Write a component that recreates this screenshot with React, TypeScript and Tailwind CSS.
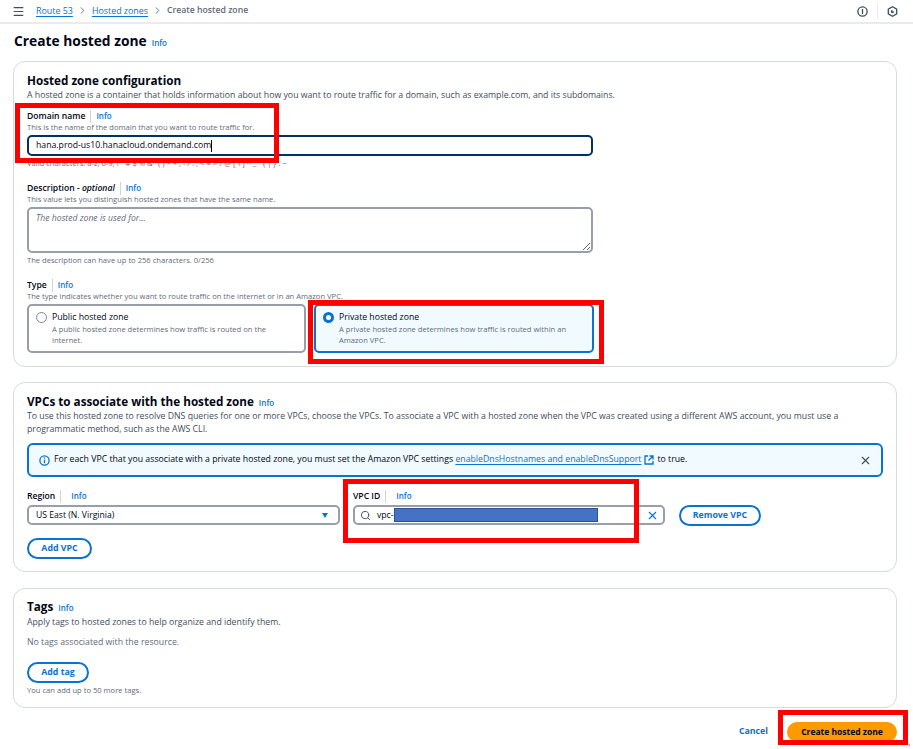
import { Search, X, Menu, ChevronRight } from "lucide-react"

const InfoLink = ({ className = "" }: { className?: string }) => (
    <span className={`text-[8px] font-semibold text-[#0972d3] ${className}`}>Info</span>
)

const FieldLabel = ({ children, gap = "ml-[5px]" }: { children: React.ReactNode; gap?: string }) => (
    <div className="flex items-center h-[14px] text-[8.6px] leading-[14px] font-semibold text-[#000716]">
        <span>{children}</span>
        <span className="ml-[5px] h-[13px] w-px bg-[#d1d5db]" />
        <InfoLink className={gap} />
    </div>
)

const Hint = ({ children, className = "" }: { children: React.ReactNode; className?: string }) => (
    <p className={`text-[7.6px] leading-[11px] text-[#5f6b7a] ${className}`}>{children}</p>
)

const CardTitle = ({ children, info = true }: { children: React.ReactNode; info?: boolean }) => (
    <div className="flex items-baseline gap-[5px]">
        <h2 className="text-[11.7px] leading-[18px] font-bold text-[#000716]">{children}</h2>
        {info && <InfoLink />}
    </div>
)

const PillButton = ({ children, className = "" }: { children: React.ReactNode; className?: string }) => (
    <button className={`h-[21px] rounded-full border-2 border-[#0972d3] bg-white text-[8.8px] font-bold text-[#0972d3] ${className}`}>
        {children}
    </button>
)

const RedBox = ({ className }: { className: string }) => (
    <div className={`absolute border-[5px] border-[#ff0000] ${className}`} />
)

const App = () => {
    return (
        <div className="relative h-[749px] w-[913px] overflow-hidden bg-white font-['Open_Sans',sans-serif] text-[#000716]">
            {/* Top bar */}
            <header className="flex h-[24px] items-center border-b-2 border-[#e9ebed] pl-[12px] pr-[15px]">
                <Menu size={13} strokeWidth={2.2} className="text-[#414d5c]" />
                <nav className="ml-[11px] flex items-center text-[8.9px] font-medium">
                    <span className="text-[#0972d3] underline underline-offset-2">Route 53</span>
                    <ChevronRight size={11} className="mx-[4px] text-[#5f6b7a]" />
                    <span className="text-[#0972d3] underline underline-offset-2">Hosted zones</span>
                    <ChevronRight size={11} className="mx-[4px] text-[#5f6b7a]" />
                    <span className="text-[8.7px] font-semibold text-[#5f6b7a]">Create hosted zone</span>
                </nav>
                <div className="ml-auto flex items-center">
                    <svg width="11" height="11" viewBox="0 0 11 11" fill="none" stroke="#414d5c" strokeWidth="1.300">
                        <circle cx="5.500" cy="5.500" r="4.600" />
                        <path d="M5.500 3v5" />
                    </svg>
                    <span className="mx-[9px] h-[16px] w-px bg-[#e9ebed]" />
                    <svg width="11" height="11" viewBox="0 0 11 11" fill="none" stroke="#414d5c" strokeWidth="1.300">
                        <path d="M5.500.8l4.200 2.300v4.800L5.500 10.200 1.300 7.900V3.100z" />
                        <path d="M5.500 3.800a1.700 1.700 0 1 0 1.700 1.700H5.500z" fill="#414d5c" stroke="none" />
                    </svg>
                </div>
            </header>

            <main className="px-[14px]">
                <div className="mt-[6px] flex items-baseline gap-[5px]">
                    <h1 className="text-[13.8px] leading-[21px] font-bold text-[#000716]">Create hosted zone</h1>
                    <InfoLink />
                </div>

                {/* Hosted zone configuration */}
                <section className="mt-[10px] -ml-px h-[306px] w-[884px] rounded-[12px] border border-[#d5dbdb] px-[13px] pt-[9px]">
                    <CardTitle info={false}>Hosted zone configuration</CardTitle>
                    <p className="text-[8.74px] leading-[13px] text-[#414d5c]">
                        A hosted zone is a container that holds information about how you want to route traffic for a domain, such as example.com, and its subdomains.
                    </p>

                    <div className="mt-[7px]">
                        <FieldLabel>Domain name</FieldLabel>
                        <Hint className="-mt-px">This is the name of the domain that you want to route traffic for.</Hint>
                        <div className="mt-[2px] flex h-[21px] w-[566px] items-center rounded-[5px] border-2 border-[#033160] pl-[7px] text-[8.7px] text-[#000716]">
                            hana.prod-us10.hanacloud.ondemand.com
                            <span className="h-[12px] w-px bg-[#000716]" />
                        </div>
                        <Hint className="mt-[2px] whitespace-nowrap">{"Valid characters: a-z, 0-9, ! \" # $ % & ' ( ) * + , - / : ; < = > ? @ [ \\ ] ^ _ ` { | } . ~"}</Hint>
                    </div>

                    <div className="mt-[12px]">
                        <FieldLabel>
                            Description - <em className="font-semibold">optional</em>
                        </FieldLabel>
                        <Hint className="-mt-px">This value lets you distinguish hosted zones that have the same name.</Hint>
                        <textarea
                            readOnly
                            placeholder="The hosted zone is used for..."
                            className="mt-[2px] block h-[46px] w-[566px] rounded-[5px] border-2 border-[#979fa9] px-[7px] py-[2px] text-[8.65px] italic leading-[14px] placeholder:text-[#5f6b7a] outline-none"
                        />
                        <Hint className="mt-[2px]">The description can have up to 256 characters. 0/256</Hint>
                    </div>

                    <div className="mt-[12px]">
                        <FieldLabel>Type</FieldLabel>
                        <Hint className="-mt-px">The type indicates whether you want to route traffic on the internet or in an Amazon VPC.</Hint>
                        <div className="mt-[2px] flex w-[567px] gap-[8px]">
                            <div className="flex h-[49px] w-[279px] rounded-[5px] border-2 border-[#979fa9] pl-[7px] pt-[5px]">
                                <span className="mt-px size-[11px] shrink-0 rounded-full border border-[#7d8998]" />
                                <div className="ml-[5px]">
                                    <div className="text-[8.7px] leading-[13px] font-medium">Public hosted zone</div>
                                    <Hint className="w-[240px] leading-[10px]">A public hosted zone determines how traffic is routed on the internet.</Hint>
                                </div>
                            </div>
                            <div className="flex h-[49px] w-[280px] rounded-[5px] border-2 border-[#0972d3] bg-[#f1faff] pl-[7px] pt-[5px]">
                                <span className="mt-px size-[11px] shrink-0 rounded-full border-[3px] border-[#0972d3] bg-white" />
                                <div className="ml-[5px]">
                                    <div className="text-[8.7px] leading-[13px] font-medium">Private hosted zone</div>
                                    <Hint className="w-[240px] leading-[10px]">A private hosted zone determines how traffic is routed within an Amazon VPC.</Hint>
                                </div>
                            </div>
                        </div>
                    </div>
                </section>

                {/* VPCs */}
                <section className="mt-[15px] -ml-px h-[190px] w-[884px] rounded-[12px] border border-[#d5dbdb] px-[13px] pt-[9px]">
                    <CardTitle>VPCs to associate with the hosted zone</CardTitle>
                    <p className="w-[840px] text-[8.74px] leading-[13px] text-[#414d5c]">
                        To use this hosted zone to resolve DNS queries for one or more VPCs, choose the VPCs. To associate a VPC with a hosted zone when the VPC was created using a different AWS account, you must use a programmatic method, such as the AWS CLI.
                    </p>

                    <div className="mt-[7px] flex h-[34px] w-[856px] items-center rounded-[6px] border-2 border-[#0972d3] bg-[#f1faff] pl-[10px] pr-[9px] text-[8.74px] text-[#000716]">
                        <svg width="11" height="11" viewBox="0 0 11 11" fill="none" stroke="#0972d3" strokeWidth="1.300">
                            <circle cx="5.500" cy="5.500" r="4.600" />
                            <path d="M5.500 2.500v1.200M5.500 4.800v3.500" />
                        </svg>
                        <span className="ml-[4px] whitespace-nowrap">
                            For each VPC that you associate with a private hosted zone, you must set the Amazon VPC settings{" "}
                            <span className="text-[#0972d3] underline underline-offset-2">enableDnsHostnames and enableDnsSupport</span>
                        </span>
                        <svg width="10" height="10" viewBox="0 0 10 10" fill="none" stroke="#0972d3" strokeWidth="1.300" className="ml-[3px]">
                            <path d="M4 1H1v8h8V6M5.500 1H9v3.500M9 1L4.500 5.500" />
                        </svg>
                        <span className="ml-[3px]">to true.</span>
                        <X size={13} strokeWidth={2} className="ml-auto text-[#414d5c]" />
                    </div>

                    <div className="mt-[12px] flex">
                        <div className="w-[313px]">
                            <FieldLabel gap="ml-[10px]">Region</FieldLabel>
                            <div className="mt-[2px] flex h-[20px] items-center justify-between rounded-[5px] border-2 border-[#979fa9] pl-[7px] pr-[10px] text-[8.65px]">
                                US East (N. Virginia)
                                <span className="h-0 w-0 border-x-[3.5px] border-t-[5px] border-x-transparent border-t-[#0972d3]" />
                            </div>
                        </div>
                        <div className="ml-[13px] w-[312px]">
                            <FieldLabel gap="ml-[10px]">VPC ID</FieldLabel>
                            <div className="mt-[2px] flex h-[20px] items-center rounded-[5px] border-2 border-[#979fa9] pl-[5px] pr-[4px] text-[8.65px]">
                                <Search size={11} className="text-[#414d5c]" />
                                <span className="ml-[6px]">vpc-</span>
                                <X size={13} strokeWidth={2} className="ml-auto text-[#0972d3]" />
                            </div>
                        </div>
                        <PillButton className="ml-[14px] mt-[16px] w-[82px]">Remove VPC</PillButton>
                    </div>

                    <PillButton className="mt-[12px] w-[65px]">Add VPC</PillButton>
                </section>

                {/* Tags */}
                <section className="mt-[16px] -ml-px h-[120px] w-[884px] rounded-[12px] border border-[#d5dbdb] px-[13px] pt-[8px]">
                    <CardTitle>Tags</CardTitle>
                    <p className="mt-px text-[8.74px] leading-[13px] text-[#414d5c]">Apply tags to hosted zones to help organize and identify them.</p>
                    <p className="mt-[7px] text-[8.74px] leading-[13px] text-[#5f6b7a]">No tags associated with the resource.</p>
                    <PillButton className="mt-[13px] block w-[62px]">Add tag</PillButton>
                    <Hint className="mt-[2px]">You can add up to 50 more tags.</Hint>
                </section>

                <div className="mt-[14px] flex w-[883px] items-center justify-end">
                    <span className="text-[8.8px] font-bold text-[#0972d3]">Cancel</span>
                    <button className="ml-[19px] h-[20px] w-[110px] rounded-full bg-[#ff9900] text-[8.5px] font-bold text-[#000716]">
                        Create hosted zone
                    </button>
                </div>
            </main>

            {/* Redaction and annotations lying over the screenshot */}
            <div className="absolute left-[394px] top-[508px] h-[14px] w-[204px] border border-[#2f528f] bg-[#4472c4]" />
            <RedBox className="left-[15px] top-[103px] h-[60px] w-[264px]" />
            <RedBox className="left-[308px] top-[300px] h-[64px] w-[296px]" />
            <RedBox className="left-[343px] top-[479px] h-[64px] w-[296px]" />
            <RedBox className="left-[778px] top-[710px] h-[35px] w-[130px]" />
            <span className="absolute left-[908px] top-[738px] text-[8px] text-[#5f6b7a]">‹</span>
        </div>
    )
}

export default App
